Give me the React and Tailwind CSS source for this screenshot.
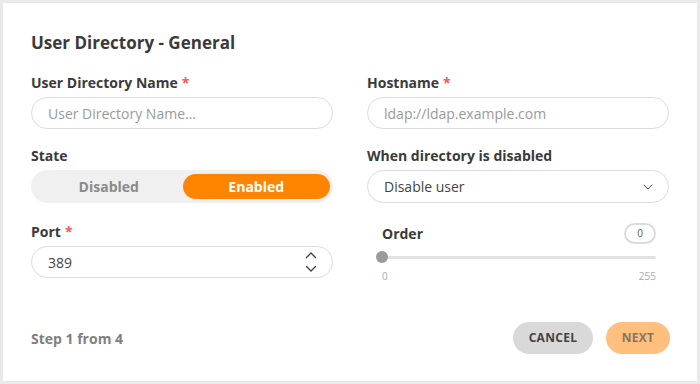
import { ChevronDown } from 'lucide-react';

const Label = ({ children, required }) => (
    <div className="text-[14px] font-bold text-[#3a3a3a] leading-5 mb-[4px]">
        {children}
        {required && <span className="text-[#f05a5a] ml-1">*</span>}
    </div>
);

const App = () => {
    return (
        <div className="w-[700px] h-[384px] bg-[#e9e9e9] p-[3px]" style={{ fontFamily: '"Open Sans", sans-serif' }}>
            <div className="w-full h-full bg-white flex flex-col px-7 pt-[28px] pb-[27px]">
                <h1 className="text-[17px] font-bold text-[#3a3a3a] leading-6">User Directory - General</h1>

                <div className="grid grid-cols-2 gap-x-[34px] mt-[18px]">
                    {/* Row 1 */}
                    <div>
                        <Label required>User Directory Name</Label>
                        <input
                            placeholder="User Directory Name..."
                            className="w-full h-[32px] rounded-full border border-[#dcdcdc] px-4 text-[14px] text-[#444] placeholder:text-[#9a9a9a] outline-none"
                        />
                    </div>
                    <div>
                        <Label required>Hostname</Label>
                        <input
                            placeholder="ldap://ldap.example.com"
                            className="w-full h-[32px] rounded-full border border-[#dcdcdc] px-4 text-[14px] text-[#444] placeholder:text-[#9a9a9a] outline-none"
                        />
                    </div>

                    {/* Row 2 */}
                    <div className="mt-[17px]">
                        <Label>State</Label>
                        <div className="h-[33px] rounded-full bg-[#f0f0f0] flex items-center p-[4px] pr-[3px]">
                            <div className="flex-1 text-center text-[14px] font-bold text-[#8a8a8a]">Disabled</div>
                            <div className="flex-1 h-[25px] rounded-full bg-[#ff8500] flex items-center justify-center text-[14px] font-bold text-white">
                                Enabled
                            </div>
                        </div>
                    </div>
                    <div className="mt-[17px]">
                        <Label>When directory is disabled</Label>
                        <div className="h-[33px] mt-[1px] rounded-full border border-[#dcdcdc] px-4 flex items-center justify-between text-[14px] text-[#444]">
                            <span>Disable user</span>
                            <ChevronDown size={16} strokeWidth={1.5} className="text-[#444] -mr-1" />
                        </div>
                    </div>

                    {/* Row 3 */}
                    <div className="mt-[19px]">
                        <Label required>Port</Label>
                        <div className="h-[32px] rounded-full border border-[#dcdcdc] pl-4 pr-[15px] flex items-center justify-between text-[14px] text-[#444]">
                            <span>389</span>
                            <svg width="12" height="22" viewBox="0 0 12 22" fill="none" stroke="#444" strokeWidth="1.4" strokeLinecap="round" strokeLinejoin="round" className="mt-[-1px]">
                                <polyline points="1.5,6.5 6,2 10.5,6.5" />
                                <polyline points="1.5,15.5 6,20 10.5,15.5" />
                            </svg>
                        </div>
                    </div>
                    <div className="mt-[19px] px-[13px]">
                        <div className="flex items-center justify-between h-[22px] pl-[2px]">
                            <span className="text-[14px] font-bold text-[#3a3a3a]">Order</span>
                            <div className="w-[32px] h-[21px] rounded-full border-2 border-[#dcdcdc] flex items-center justify-center text-[10px] text-[#555]">
                                0
                            </div>
                        </div>
                        <div className="relative h-[14px] mt-[6px] flex items-center">
                            <div className="w-full h-[3px] bg-[#e2e2e2] rounded-full" />
                            <div className="absolute left-[-4px] top-[1px] w-[12px] h-[12px] rounded-full bg-[#9a9a9a]" />
                        </div>
                        <div className="flex justify-between text-[10px] text-[#aaa] leading-4 mt-[4px]">
                            <span className="ml-[2px]">0</span>
                            <span>255</span>
                        </div>
                    </div>
                </div>

                <div className="mt-auto flex items-center justify-between">
                    <span className="text-[14px] font-bold text-[#808080]">Step 1 from 4</span>
                    <div className="flex items-center gap-[13px] mr-[-1px]">
                        <button className="w-[80px] h-[32px] rounded-full bg-[#d9d9d9] text-[12px] font-bold text-[#444] tracking-wide">
                            CANCEL
                        </button>
                        <button className="w-[64px] h-[32px] rounded-full bg-[#ffc07f] text-[12px] font-bold text-[#8c735f] tracking-wide">
                            NEXT
                        </button>
                    </div>
                </div>
            </div>
        </div>
    );
};

export default App;
